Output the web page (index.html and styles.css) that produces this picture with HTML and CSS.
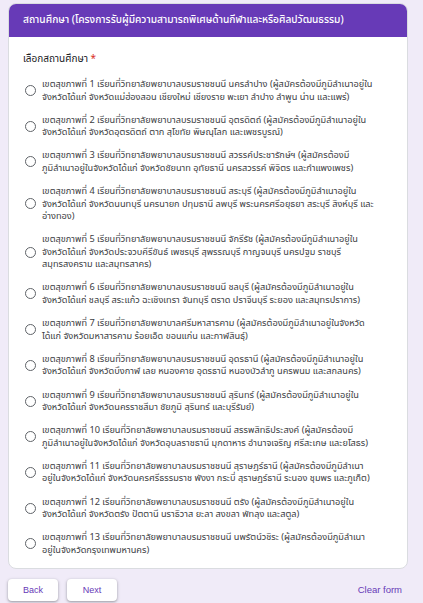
FILE: index.html
```html
<!DOCTYPE html>
<html lang="th">
<head>
  <meta charset="UTF-8" />
  <title>สถานศึกษา</title>
  <meta name="viewport" content="width=device-width, initial-scale=1" />
  <link rel="stylesheet" href="styles.css">
</head>
<body>

  <div class="card">
    <div class="card-head">สถานศึกษา (โครงการรับผู้มีความสามารถพิเศษด้านกีฬาและหรือศิลปวัฒนธรรม)</div>
    <div class="card-body">
      <div class="question">เลือกสถานศึกษา <span class="req">*</span></div>

      <label class="option"><span class="radio"></span><span class="opt-text">เขตสุขภาพที่ 1 เรียนที่วิทยาลัยพยาบาลบรมราชชนนี นครลำปาง (ผู้สมัครต้องมีภูมิลำเนาอยู่ใน<br>จังหวัดได้แก่ จังหวัดแม่ฮ่องสอน เชียงใหม่ เชียงราย พะเยา ลำปาง ลำพูน น่าน และแพร่)</span></label>
      <label class="option"><span class="radio"></span><span class="opt-text">เขตสุขภาพที่ 2 เรียนที่วิทยาลัยพยาบาลบรมราชชนนี อุตรดิตถ์ (ผู้สมัครต้องมีภูมิลำเนาอยู่ใน<br>จังหวัดได้แก่ จังหวัดอุตรดิตถ์ ตาก สุโขทัย พิษณุโลก และเพชรบูรณ์)</span></label>
      <label class="option"><span class="radio"></span><span class="opt-text">เขตสุขภาพที่ 3 เรียนที่วิทยาลัยพยาบาลบรมราชชนนี สวรรค์ประชารักษ์ฯ (ผู้สมัครต้องมี<br>ภูมิลำเนาอยู่ในจังหวัดได้แก่ จังหวัดชัยนาท อุทัยธานี นครสวรรค์ พิจิตร และกำแพงเพชร)</span></label>
      <label class="option"><span class="radio"></span><span class="opt-text">เขตสุขภาพที่ 4 เรียนที่วิทยาลัยพยาบาลบรมราชชนนี สระบุรี (ผู้สมัครต้องมีภูมิลำเนาอยู่ใน<br>จังหวัดได้แก่ จังหวัดนนทบุรี นครนายก ปทุมธานี ลพบุรี พระนครศรีอยุธยา สระบุรี สิงห์บุรี และ<br>อ่างทอง)</span></label>
      <label class="option"><span class="radio"></span><span class="opt-text">เขตสุขภาพที่ 5 เรียนที่วิทยาลัยพยาบาลบรมราชชนนี จักรีรัช (ผู้สมัครต้องมีภูมิลำเนาอยู่ใน<br>จังหวัดได้แก่ จังหวัดประจวบคีรีขันธ์ เพชรบุรี สุพรรณบุรี กาญจนบุรี นครปฐม ราชบุรี<br>สมุทรสงคราม และสมุทรสาคร)</span></label>
      <label class="option"><span class="radio"></span><span class="opt-text">เขตสุขภาพที่ 6 เรียนที่วิทยาลัยพยาบาลบรมราชชนนี ชลบุรี (ผู้สมัครต้องมีภูมิลำเนาอยู่ใน<br>จังหวัดได้แก่ ชลบุรี สระแก้ว ฉะเชิงเทรา จันทบุรี ตราด ปราจีนบุรี ระยอง และสมุทรปราการ)</span></label>
      <label class="option"><span class="radio"></span><span class="opt-text">เขตสุขภาพที่ 7 เรียนที่วิทยาลัยพยาบาลศรีมหาสารคาม (ผู้สมัครต้องมีภูมิลำเนาอยู่ในจังหวัด<br>ได้แก่ จังหวัดมหาสารคาม ร้อยเอ็ด ขอนแก่น และกาฬสินธุ์)</span></label>
      <label class="option"><span class="radio"></span><span class="opt-text">เขตสุขภาพที่ 8 เรียนที่วิทยาลัยพยาบาลบรมราชชนนี อุดรธานี (ผู้สมัครต้องมีภูมิลำเนาอยู่ใน<br>จังหวัดได้แก่ จังหวัดบึงกาฬ เลย หนองคาย อุดรธานี หนองบัวลำภู นครพนม และสกลนคร)</span></label>
      <label class="option"><span class="radio"></span><span class="opt-text">เขตสุขภาพที่ 9 เรียนที่วิทยาลัยพยาบาลบรมราชชนนี สุรินทร์ (ผู้สมัครต้องมีภูมิลำเนาอยู่ใน<br>จังหวัดได้แก่ จังหวัดนครราชสีมา ชัยภูมิ สุรินทร์ และบุรีรัมย์)</span></label>
      <label class="option"><span class="radio"></span><span class="opt-text">เขตสุขภาพที่ 10 เรียนที่วิทยาลัยพยาบาลบรมราชชนนี สรรพสิทธิประสงค์ (ผู้สมัครต้องมี<br>ภูมิลำเนาอยู่ในจังหวัดได้แก่ จังหวัดอุบลราชธานี มุกดาหาร อำนาจเจริญ ศรีสะเกษ และยโสธร)</span></label>
      <label class="option"><span class="radio"></span><span class="opt-text">เขตสุขภาพที่ 11 เรียนที่วิทยาลัยพยาบาลบรมราชชนนี สุราษฎร์ธานี (ผู้สมัครต้องมีภูมิลำเนา<br>อยู่ในจังหวัดได้แก่ จังหวัดนครศรีธรรมราช พังงา กระบี่ สุราษฎร์ธานี ระนอง ชุมพร และภูเก็ต)</span></label>
      <label class="option"><span class="radio"></span><span class="opt-text">เขตสุขภาพที่ 12 เรียนที่วิทยาลัยพยาบาลบรมราชชนนี ตรัง (ผู้สมัครต้องมีภูมิลำเนาอยู่ใน<br>จังหวัดได้แก่ จังหวัดตรัง ปัตตานี นราธิวาส ยะลา สงขลา พัทลุง และสตูล)</span></label>
      <label class="option"><span class="radio"></span><span class="opt-text">เขตสุขภาพที่ 13 เรียนที่วิทยาลัยพยาบาลบรมราชชนนี นพรัตน์วชิระ (ผู้สมัครต้องมีภูมิลำเนา<br>อยู่ในจังหวัดกรุงเทพมหานคร)</span></label>
    </div>
  </div>

  <div class="nav">
    <button class="btn">Back</button>
    <button class="btn">Next</button>
    <a class="clear" href="#">Clear form</a>
  </div>

</body>
</html>
```

FILE: styles.css
```css
body {
  margin: 0;
  background: #f0ebf8;
  font-family: 'Noto Sans Thai', Tahoma, 'DejaVu Sans', sans-serif;
  color: #202124;
  padding: 3px 15px 0 8px;
}

.card {
  background: #fff;
  border: 1px solid #dadce0;
  border-radius: 8px;
  overflow: hidden;
}

.card-head {
  background: #673ab7;
  color: #fff;
  font-size: 10.2px;
  font-weight: 500;
  padding: 8px 14px 9px;
}

.card-body {
  padding: 14px 8px 1px 14px;
}

.question {
  font-size: 10px;
  margin-bottom: 11px;
}
.req {
  color: #d93025;
}

.option {
  display: flex;
  align-items: center;
  gap: 6px;
  padding: 0 0 10.7px 2px;
  font-size: 9.2px;
  line-height: 12.5px;
  color: #3c4043;
  cursor: pointer;
}
.radio {
  flex: none;
  width: 9px;
  height: 9px;
  border: 1.5px solid #5f6368;
  border-radius: 50%;
}
.opt-text {
  flex: 1;
}

.nav {
  display: flex;
  align-items: center;
  gap: 9px;
  padding: 10px 0;
}
.btn {
  width: 50px;
  height: 22px;
  border: none;
  border-radius: 4px;
  background: #fff;
  color: #673ab7;
  font-family: 'Liberation Sans', Arial, sans-serif;
  font-size: 9px;
  box-shadow: 0 1px 2px rgba(60, 64, 67, 0.3), 0 1px 3px 1px rgba(60, 64, 67, 0.15);
}
.clear {
  margin-left: auto;
  color: #673ab7;
  font-family: 'Liberation Sans', Arial, sans-serif;
  font-size: 9.5px;
  text-decoration: none;
  padding-right: 6px;
}
```
